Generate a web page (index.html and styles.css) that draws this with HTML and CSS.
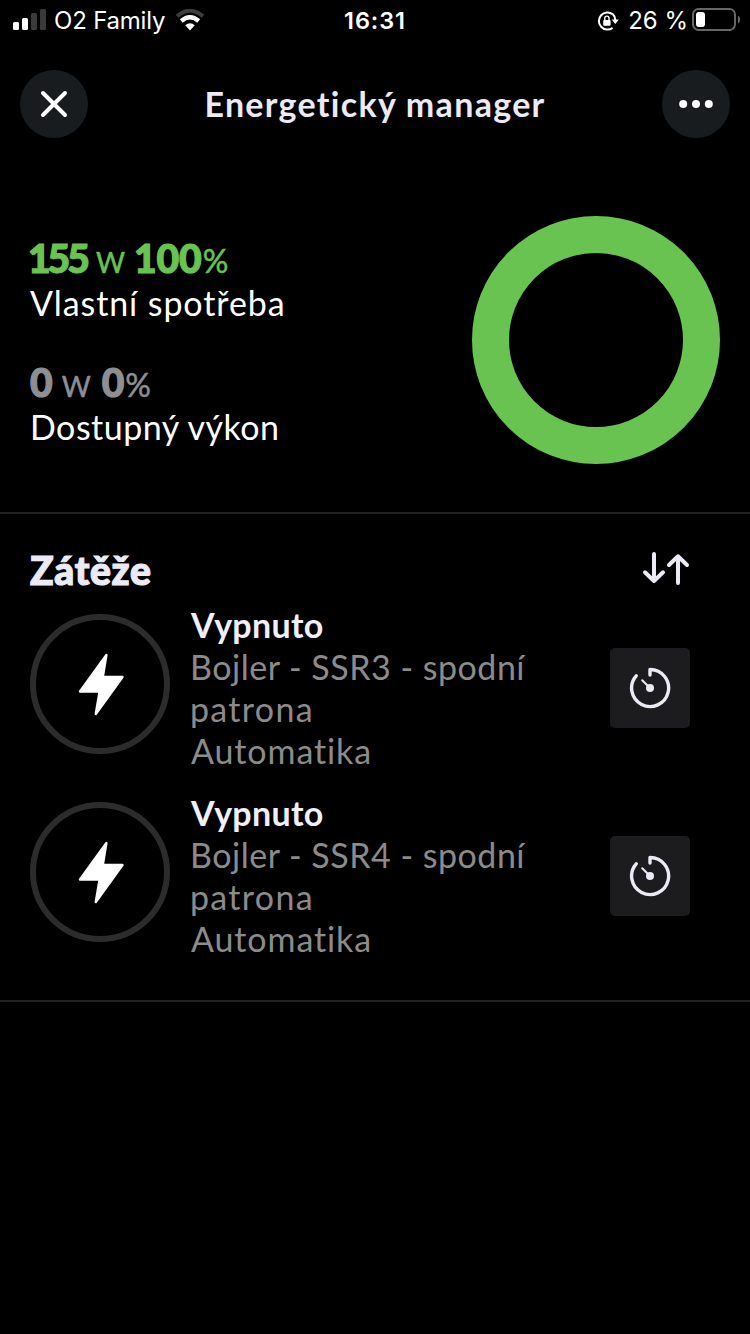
FILE: index.html
```html
<!DOCTYPE html>
<html lang="cs">
<head>
<meta charset="utf-8">
<title>Energetický manager</title>
<link rel="stylesheet" href="styles.css">
</head>
<body>
<div class="status">
  <div class="status-left">
    <svg class="signal" width="34" height="22" viewBox="0 0 34 22"><rect x="0" y="13" width="6" height="8" rx="1.5" fill="#fff"/><rect x="9" y="9" width="6" height="12" rx="1.5" fill="#fff"/><rect x="18" y="4" width="6" height="17" rx="1.5" fill="#3a3a3a"/><rect x="27" y="0" width="6" height="21" rx="1.5" fill="#3a3a3a"/></svg>
    <span class="carrier">O2 Family</span>
    <svg class="wifi" width="30" height="22" viewBox="0 0 30 22" fill="none"><path d="M2 7.3Q15-4 28 7.3" stroke="#3d3d3d" stroke-width="4"/><path d="M6.3 12Q15 4.5 23.7 12" stroke="#fff" stroke-width="4.4"/><path d="M10.2 16.3Q15 12.3 19.8 16.3L15 21.5Z" fill="#fff"/></svg>
  </div>
  <span class="clock">16:31</span>
  <div class="status-right">
    <svg class="lock" width="22" height="20" viewBox="0 0 22 20" fill="none"><path d="M15.6 3.1A8.6 8.6 0 1 0 15.6 16.9" stroke="#fff" stroke-width="2"/><path d="M15.6 3.1Q18.2 5.3 18.3 9" stroke="#fff" stroke-width="2"/><path d="M14.8 8.5h7l-3.5 4.6z" fill="#fff"/><rect x="6.2" y="9" width="7.4" height="5.8" rx="1" fill="#fff"/><path d="M7.8 9V7.2a2.1 2.1 0 0 1 4.2 0V9" stroke="#fff" stroke-width="1.4"/></svg>
    <span class="percent">26 %</span>
    <svg class="battery" width="48" height="24" viewBox="0 0 48 24"><rect x="1" y="1" width="42" height="21" rx="5.5" fill="none" stroke="#666" stroke-width="2"/><rect x="4" y="4" width="9" height="15" rx="3" fill="#fff"/><path d="M46 7.5q2.2 1.5 2.2 4t-2.2 4z" fill="#666"/></svg>
  </div>
</div>

<header class="header">
  <button class="round" aria-label="Zavřít"><svg width="28" height="28" viewBox="0 0 28 28"><path d="M3 3l22 22M25 3L3 25" stroke="#fff" stroke-width="4" stroke-linecap="round"/></svg></button>
  <h1 class="title">Energetický manager</h1>
  <button class="round" aria-label="Více"><svg width="34" height="8" viewBox="0 0 34 8" fill="#fff"><circle cx="4.2" cy="4" r="4"/><circle cx="17" cy="4" r="4"/><circle cx="29.8" cy="4" r="4"/></svg></button>
</header>

<section class="summary">
  <div class="stats">
    <div class="stat">
      <div class="reading green"><b class="tight">155</b><span class="unit">W</span><b>100</b><span class="pct">%</span></div>
      <div class="label own">Vlastní spotřeba</div>
    </div>
    <div class="stat">
      <div class="reading gray"><b>0</b><span class="unit wide">W</span><b>0</b><span class="pct">%</span></div>
      <div class="label avail">Dostupný výkon</div>
    </div>
  </div>
  <div class="ring"></div>
</section>

<section class="loads">
  <div class="loads-head">
    <h2 class="heading">Zátěže</h2>
    <svg width="48" height="34" viewBox="0 0 48 34" fill="none" stroke="#ebeaf5" stroke-width="4" stroke-linecap="round" stroke-linejoin="round"><path d="M12 3V30M3 21.3L12 30L21 21.3M36 32V5.3M27 14L36 5.3L45 14"/></svg>
  </div>
  <div class="load">
    <div class="bolt"><svg width="48" height="64" viewBox="0 0 48 64"><path d="M29.4 3L3 39.5H22.6L18.8 62L45.5 25H25.8Z" fill="#fff" stroke="#fff" stroke-width="2.4" stroke-linejoin="round"/></svg></div>
    <div class="info"><div class="state">Vypnuto</div><div class="device">Bojler - SSR3 - spodní</div><div class="device-end">patrona</div><div class="mode">Automatika</div></div>
    <button class="timer" aria-label="Časovač"><svg width="42" height="42" viewBox="0 0 42 42" fill="none" stroke="#ebeaf5" stroke-linecap="round" stroke-linejoin="round"><path d="M21 8V2.5A18.5 18.5 0 1 1 7.2 8.8" stroke-width="3.4"/><path d="M13.2 13.2L21 21" stroke-width="2"/><circle cx="21" cy="21" r="4" fill="#ebeaf5" stroke="none"/></svg></button>
  </div>
  <div class="load">
    <div class="bolt"><svg width="48" height="64" viewBox="0 0 48 64"><path d="M29.4 3L3 39.5H22.6L18.8 62L45.5 25H25.8Z" fill="#fff" stroke="#fff" stroke-width="2.4" stroke-linejoin="round"/></svg></div>
    <div class="info"><div class="state">Vypnuto</div><div class="device">Bojler - SSR4 - spodní</div><div class="device-end">patrona</div><div class="mode">Automatika</div></div>
    <button class="timer" aria-label="Časovač"><svg width="42" height="42" viewBox="0 0 42 42" fill="none" stroke="#ebeaf5" stroke-linecap="round" stroke-linejoin="round"><path d="M21 8V2.5A18.5 18.5 0 1 1 7.2 8.8" stroke-width="3.4"/><path d="M13.2 13.2L21 21" stroke-width="2"/><circle cx="21" cy="21" r="4" fill="#ebeaf5" stroke="none"/></svg></button>
  </div>
</section>
</body>
</html>
```
FILE: styles.css
```css
* { box-sizing: border-box; }
html { background: #000; }
body {
  margin: 0;
  width: 750px;
  height: 1334px;
  overflow: hidden;
  background: #000;
  color: #fff;
  font-family: Lato, "Open Sans", sans-serif;
}
svg { display: block; flex: none; }
h1, h2 { margin: 0; }
button { border: 0; padding: 0; color: inherit; }

.status {
  display: grid;
  grid-template-columns: 1fr auto 1fr;
  height: 40px;
  padding: 0 11px 0 13px;
  font-family: Inter, sans-serif;
  font-size: 24px;
  line-height: 41px;
  white-space: nowrap;
}
.status-left, .status-right { display: flex; }
.status-right { justify-content: flex-end; }
.signal { margin-top: 9px; }
.carrier { margin-left: 7px; width: 112px; letter-spacing: -0.2px; }
.wifi { margin: 9px 0 0 9px; }
.clock { font-weight: 600; font-size: 23.5px; letter-spacing: 0.9px; margin-right: 2px; }
.lock { margin-top: 11px; }
.percent { margin-left: 9px; }
.battery { margin: 8px -1px 0 4px; }

.header {
  display: flex;
  align-items: center;
  justify-content: space-between;
  margin-top: 30px;
  padding: 0 20px;
  height: 68px;
}
.round {
  display: flex;
  align-items: center;
  justify-content: center;
  width: 68px;
  height: 68px;
  border-radius: 50%;
  background: #181c1f;
}
.title {
  font-size: 34px;
  line-height: 42px;
  font-weight: 700;
  color: #ebeaf5;
  letter-spacing: 1.3px;
}

.summary {
  display: flex;
  justify-content: space-between;
  height: 376px;
  padding: 78px 30px 0;
  border-bottom: 2px solid #242424;
}
.stats {
  display: flex;
  flex-direction: column;
  gap: 34px;
  padding-top: 20px;
  white-space: nowrap;
}
.stat { height: 90px; }
.reading { display: flex; align-items: baseline; height: 46px; line-height: 44px; font-size: 39px; }
.reading b { font-weight: 900; -webkit-text-stroke: 1.2px currentColor; }
.reading .tight { letter-spacing: -3px; margin-left: -2px; }
.unit { font-size: 28px; margin: 0 9px; -webkit-text-stroke: 0.5px currentColor; }
.unit.wide { margin-right: 11px; }
.pct { font-size: 32px; margin-left: 1px; line-height: 1; -webkit-text-stroke: 0.5px currentColor; }
.green { color: #69c350; }
.gray { color: #8e8e93; }
.label { font-size: 34px; line-height: 42px; }
.own { letter-spacing: 0.9px; }
.avail { letter-spacing: 0.5px; }
.ring { width: 248px; height: 248px; border: 37px solid #69c350; border-radius: 50%; }

.loads {
  height: 488px;
  padding: 34px 60px 0 30px;
  border-bottom: 2px solid #242424;
}
.loads-head { display: flex; justify-content: space-between; height: 56px; }
.loads-head svg { margin: 3px 0 0 0; }
.heading {
  font-size: 39px;
  line-height: 44px;
  font-weight: 900;
  letter-spacing: 0.7px;
  color: #ebeaf5;
  -webkit-text-stroke: 1.2px currentColor;
}
.load { display: flex; height: 188px; }
.bolt {
  display: flex;
  align-items: center;
  justify-content: center;
  width: 140px;
  height: 140px;
  margin-top: 10px;
  border: 6px solid #2c2c2c;
  border-radius: 50%;
  padding: 0 0 1px 1px;
}
.info {
  flex: 1;
  margin-left: 20px;
  font-size: 34px;
  line-height: 42px;
  color: #8b8b8b;
  white-space: nowrap;
}
.state { margin-left: 1px; font-weight: 700; color: #f0effa; letter-spacing: 0.3px; }
.device { letter-spacing: 0.5px; }
.device-end { letter-spacing: 1.3px; }
.mode { margin-left: 1px; letter-spacing: 0.9px; }
.timer {
  display: flex;
  align-items: center;
  justify-content: center;
  width: 80px;
  height: 80px;
  margin-top: 44px;
  border-radius: 5px;
  background: #1c1c1e;
}
```
